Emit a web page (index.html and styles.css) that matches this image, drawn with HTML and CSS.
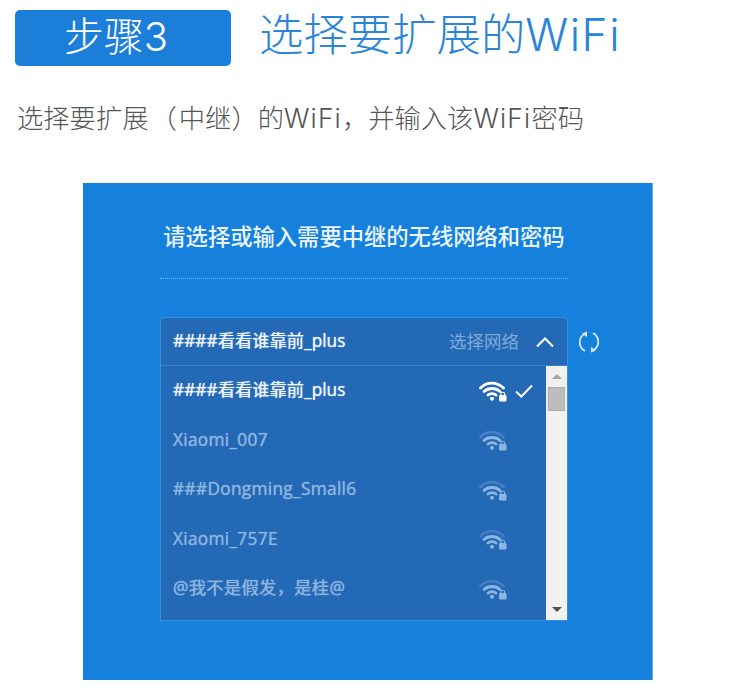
FILE: index.html
```html
<!DOCTYPE html>
<html lang="zh-CN">
<head>
    <meta charset="UTF-8">
    <title>步骤3 - 选择要扩展的WiFi</title>
    <link rel="stylesheet" href="styles.css">
</head>
<body>
    <svg class="defs" width="0" height="0">
        <symbol id="wifi" viewBox="0 0 28 22">
            <path class="wifi-outer" d="M1.500 8C8 1.500 17.500 1.500 24.500 8"/>
            <path class="wifi-arc" d="M5 11.500C9 7.500 17 7.500 21 11.500"/>
            <path class="wifi-arc" d="M9 15C11 13.200 15 13.200 17 15"/>
            <circle cx="13" cy="18.800" r="2" fill="currentColor"/>
            <rect x="20" y="15" width="7.500" height="6.500" rx="1.200" fill="currentColor"/>
            <path d="M21.900 15.500v-1.400a1.850 1.850 0 0 1 3.700 0v1.400" fill="none" stroke="currentColor" stroke-width="1.200"/>
        </symbol>
    </svg>

    <div class="step-header">
        <div class="step-badge">步骤3</div>
        <h1 class="step-title">选择要扩展的<span class="latin">WiFi</span></h1>
    </div>
    <p class="step-desc">选择要扩展<span class="paren paren-open">（</span>中继<span class="paren">）</span>的<span class="latin">WiFi</span>，并输入该<span class="latin">WiFi</span>密码</p>

    <div class="panel">
        <h2 class="panel-title">请选择或输入需要中继的无线网络和密码</h2>
        <div class="panel-line"></div>

        <div class="select-wrap">
            <div class="select">
                <div class="select-head">
                    <span class="net-name">####看看谁靠前_plus</span>
                    <span class="select-hint">选择网络</span>
                    <svg class="chevron" width="20" height="12" viewBox="0 0 20 12">
                        <path d="M2 10.500L10 2.500L18 10.500" fill="none" stroke="#fff" stroke-width="2"/>
                    </svg>
                </div>
                <div class="select-body">
                    <ul class="net-list">
                        <li class="net net-active">
                            <span class="net-name">####看看谁靠前_plus</span>
                            <svg class="net-wifi"><use href="#wifi"/></svg>
                            <svg class="net-check" width="18" height="14" viewBox="0 0 18 14">
                                <path d="M1 7.500L6.300 12.500L17 1.500" fill="none" stroke="#fff" stroke-width="2"/>
                            </svg>
                        </li>
                        <li class="net">
                            <span class="net-name">Xiaomi_007</span>
                            <svg class="net-wifi"><use href="#wifi"/></svg>
                        </li>
                        <li class="net">
                            <span class="net-name">###Dongming_Small6</span>
                            <svg class="net-wifi"><use href="#wifi"/></svg>
                        </li>
                        <li class="net">
                            <span class="net-name">Xiaomi_757E</span>
                            <svg class="net-wifi"><use href="#wifi"/></svg>
                        </li>
                        <li class="net">
                            <span class="net-name">@我不是假发，是桂@</span>
                            <svg class="net-wifi"><use href="#wifi"/></svg>
                        </li>
                    </ul>
                    <div class="scrollbar">
                        <span class="arrow arrow-up"></span>
                        <div class="scroll-track"><div class="scroll-thumb"></div></div>
                        <span class="arrow arrow-down"></span>
                    </div>
                </div>
            </div>
            <svg class="refresh" width="22" height="22" viewBox="0 0 22 22">
                <path d="M7 3C0 6 0 16 7 20" fill="none" stroke="#d5e8f8" stroke-width="1.800"/>
                <path d="M15 2C22 6 22 16 15 19" fill="none" stroke="#d5e8f8" stroke-width="1.800"/>
                <path d="M9 0.500V6L4 2.500Z" fill="#d5e8f8"/>
                <path d="M13 21.500V16L18 19.500Z" fill="#d5e8f8"/>
            </svg>
        </div>
    </div>
</body>
</html>
```

FILE: styles.css
```css
* {
    margin: 0;
    padding: 0;
    box-sizing: border-box;
}

body {
    font-family: "Noto Sans CJK SC", "Noto Sans", sans-serif;
    background: white;
}

.defs {
    display: block;
    height: 0;
}

.step-header {
    display: flex;
    align-items: center;
    padding: 10px 0 0 15px;
}

.step-badge {
    width: 216px;
    height: 56px;
    padding: 0 14px 2px 0;
    background: #1b7ed9;
    border-radius: 5px;
    color: white;
    font-family: Inter, "Noto Sans CJK SC", sans-serif;
    font-size: 40px;
    font-weight: 300;
    line-height: 54px;
    text-align: center;
}

.step-title {
    margin: -6px 0 0 28px;
    color: #2a85d8;
    font-family: Inter, "Noto Sans CJK SC", sans-serif;
    font-size: 44.400px;
    font-weight: 300;
    line-height: 56px;
    white-space: nowrap;
}

.step-title .latin {
    letter-spacing: 1.500px;
}

.step-desc {
    margin: 27px 0 0 17px;
    color: #555;
    font-family: Inter, "Noto Sans CJK SC", sans-serif;
    font-size: 26.300px;
    font-weight: 300;
    line-height: 52px;
    white-space: nowrap;
}

.step-desc .latin {
    letter-spacing: 1.200px;
}

.paren {
    margin: 0;
}

.paren-open {
    margin: 0 2px;
}

.panel {
    margin: 38px 0 0 83px;
    width: 570px;
    height: 497px;
    background: #1681dc;
    border-right: 1px solid #5ea8e6;
    padding: 32px 0 0 77px;
}

.panel-title {
    width: 408px;
    margin-top: -2px;
    color: #eaf4fc;
    font-size: 22.300px;
    font-weight: 500;
    line-height: 44px;
    text-align: center;
    white-space: nowrap;
}

.panel-line {
    width: 408px;
    margin-top: 21px;
    border-top: 1px dotted #7db8ea;
}

.select-wrap {
    display: flex;
    align-items: flex-start;
    margin-top: 38px;
}

.select {
    width: 408px;
    height: 304px;
    background: #2369b6;
    border: 1px solid #3c8fe0;
    border-radius: 4px 4px 0 0;
}

.select-head {
    display: flex;
    align-items: center;
    height: 48px;
    padding: 0 12px;
    border-bottom: 1px solid #3c80c6;
}

.select-hint {
    margin-left: auto;
    padding-bottom: 2px;
    color: #7fa9d6;
    font-size: 17.500px;
}

.chevron {
    margin-left: 16px;
}

.net-name {
    padding-bottom: 1px;
    font-family: "Open Sans", "Noto Sans CJK SC", sans-serif;
    font-size: 17.300px;
    line-height: 24px;
    letter-spacing: 0.300px;
    text-shadow: 0 0 1px currentColor;
}

.select-head .net-name,
.net-active .net-name {
    color: #eef5fc;
    letter-spacing: 0;
}

.select-body {
    display: flex;
    height: 254px;
}

.net-list {
    flex: 1;
    list-style: none;
}

.net {
    display: flex;
    align-items: center;
    height: 49.500px;
    padding-left: 12px;
    color: #8db6e0;
}

.net-wifi {
    --outer-arc: 0.3;
    width: 28px;
    height: 22px;
    margin-left: auto;
    margin-right: 39px;
    color: #8db6e0;
}

.net-active .net-wifi {
    --outer-arc: 1;
    margin-right: 8px;
    color: white;
}

.wifi-outer,
.wifi-arc {
    fill: none;
    stroke: currentColor;
    stroke-width: 2.800;
    stroke-linecap: round;
}

.wifi-outer {
    stroke-opacity: var(--outer-arc);
}

.net-check {
    margin-right: 13px;
}

.scrollbar {
    display: flex;
    flex-direction: column;
    align-items: center;
    width: 21px;
    background: #f1f1f1;
}

.arrow {
    width: 0;
    height: 0;
    border-left: 5px solid transparent;
    border-right: 5px solid transparent;
}

.arrow-up {
    margin-top: 8px;
    border-bottom: 5px solid #a3a3a3;
}

.arrow-down {
    margin-bottom: 8px;
    border-top: 5px solid #505050;
}

.scroll-track {
    flex: 1;
    width: 100%;
    padding: 8px 2px 0;
}

.scroll-thumb {
    width: 100%;
    height: 24px;
    background: #bdbdbd;
    border: 1px solid #acacac;
}

.refresh {
    margin: 14px 0 0 10px;
}
```
